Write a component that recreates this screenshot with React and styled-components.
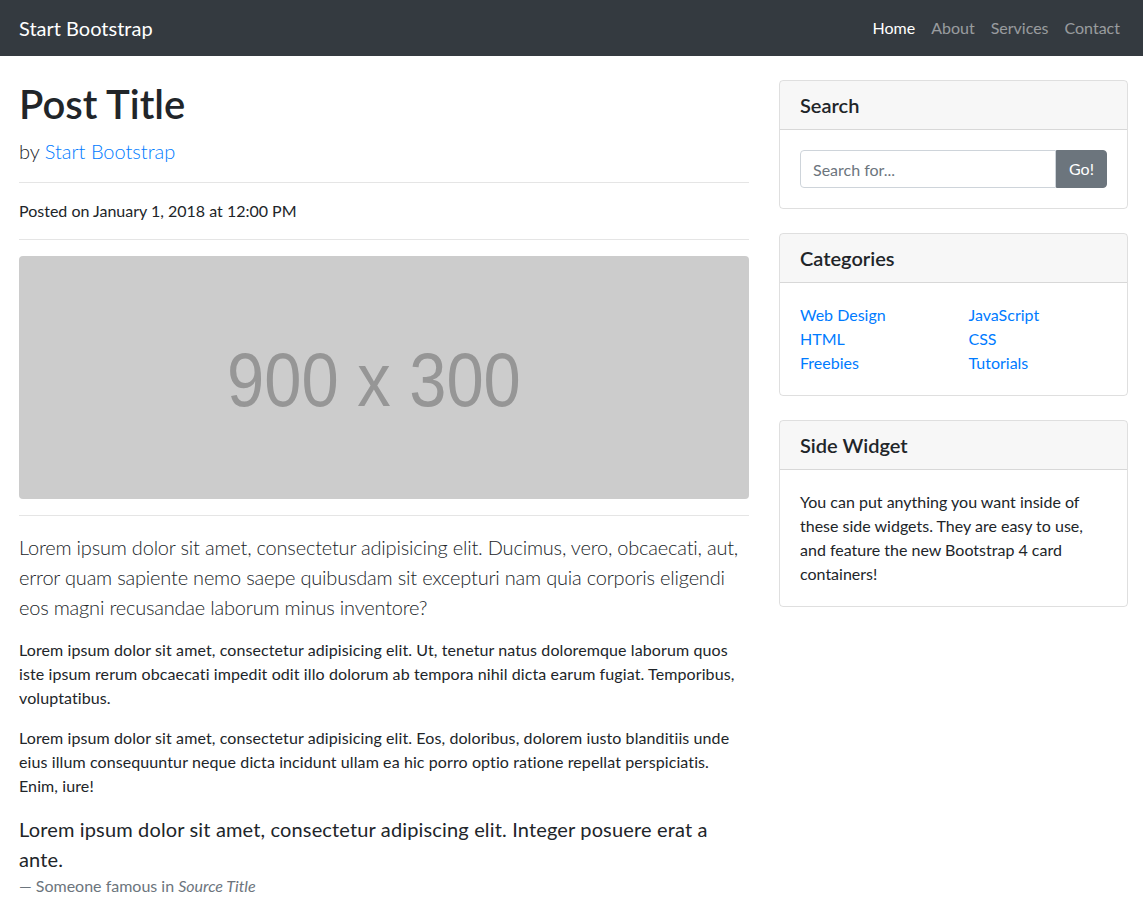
import React from 'react';
import styled, {createGlobalStyle} from 'styled-components';

const GlobalStyle = createGlobalStyle`
  html, body {
    margin: 0;
    padding: 0;
    background: #fff;
  }
  body {
    font-family: Lato, "Open Sans", "Noto Sans", sans-serif;
    font-size: 16px;
    line-height: 1.5;
    color: #212529;
  }
  * {
    box-sizing: border-box;
  }
`;

const Navbar = styled.nav`
  background: #343a40;
  height: 56px;
  display: flex;
  align-items: center;
  justify-content: space-between;
  padding: 0 15px 0 19px;
`;

const Brand = styled.a`
  color: #fff;
  font-size: 20px;
  line-height: 30px;
  text-decoration: none;
`;

const NavList = styled.ul`
  display: flex;
  list-style: none;
  margin: 0;
  padding: 0;
`;

const NavLink = styled.a`
  display: block;
  padding: 8px;
  font-size: 16px;
  line-height: 24px;
  text-decoration: none;
  color: ${(p) => (p.$active ? '#fff' : 'rgba(255, 255, 255, 0.5)')};
`;

const Container = styled.div`
  display: grid;
  grid-template-columns: 730px 349px;
  column-gap: 30px;
  padding: 0 15px 0 19px;
  align-items: start;
`;

const Main = styled.main`
  padding-top: 24px;
`;

const Title = styled.h1`
  margin: 0 0 8px;
  font-size: 40px;
  line-height: 48px;
  font-weight: 600;
`;

const Lead = styled.p`
  margin: 0 0 16px;
  font-size: 20px;
  line-height: 30px;
  font-weight: 300;
  letter-spacing: ${(p) => p.$spacing || '0'};
`;

const Link = styled.a`
  color: #007bff;
  text-decoration: none;
`;

const Rule = styled.hr`
  margin: 16px 0;
  border: 0;
  border-top: 1px solid rgba(0, 0, 0, 0.1);
`;

const Text = styled.p`
  margin: 0 0 16px;
  letter-spacing: ${(p) => p.$spacing || '0'};
`;

const Placeholder = styled.div`
  height: 243px;
  border-radius: 4px;
  background: #cccccc;
  display: flex;
  align-items: center;
  justify-content: center;
  padding-right: 20px;
`;

const PlaceholderLabel = styled.span`
  color: #969696;
  font-family: "Liberation Sans", Arial, sans-serif;
  font-size: 76px;
  line-height: 1;
  transform: scaleX(0.88);
  white-space: nowrap;
  margin-top: 4px;
`;

const Quote = styled.blockquote`
  margin: 0 0 16px;
  font-size: 20px;
  line-height: 30px;
`;

const QuoteText = styled.p`
  margin: 0;
  letter-spacing: 0.15px;
`;

const QuoteFooter = styled.footer`
  display: block;
  font-size: 16px;
  line-height: 24px;
  color: #6c757d;
`;

const Sidebar = styled.aside`
  padding-top: 24px;
  display: flex;
  flex-direction: column;
  gap: 24px;
`;

const Card = styled.div`
  border: 1px solid rgba(0, 0, 0, 0.125);
  border-radius: 4px;
  overflow: hidden;
`;

const CardHeader = styled.h5`
  margin: 0;
  padding: 12px 20px;
  font-size: 20px;
  line-height: 24px;
  font-weight: 600;
  background: rgba(0, 0, 0, 0.03);
  border-bottom: 1px solid rgba(0, 0, 0, 0.125);
`;

const CardBody = styled.div`
  padding: 20px;
`;

const InputGroup = styled.div`
  display: flex;
`;

const SearchInput = styled.input`
  flex: 1;
  min-width: 0;
  height: 38px;
  padding: 6px 12px;
  font: inherit;
  font-size: 16px;
  color: #495057;
  border: 1px solid #ced4da;
  border-radius: 4px 0 0 4px;
  outline: none;
  &::placeholder {
    color: #6c757d;
  }
`;

const GoButton = styled.button`
  height: 38px;
  width: 51px;
  font: inherit;
  font-size: 16px;
  color: #fff;
  background: #6c757d;
  border: 1px solid #6c757d;
  border-radius: 0 4px 4px 0;
  padding: 6px 12px;
`;

const CategoryGrid = styled.div`
  display: grid;
  grid-template-columns: 1fr 1fr;
  column-gap: 30px;
`;

const CategoryList = styled.ul`
  list-style: none;
  margin: 0;
  padding: 0;
`;

const navItems = ['Home', 'About', 'Services', 'Contact'];
const categories = [
  ['Web Design', 'HTML', 'Freebies'],
  ['JavaScript', 'CSS', 'Tutorials']
];

export default function App() {
  return (
    <>
      <GlobalStyle />
      <Navbar>
        <Brand href="#">Start Bootstrap</Brand>
        <NavList>
          {navItems.map((item, i) => (
            <li key={item}>
              <NavLink href="#" $active={i === 0}>
                {item}
              </NavLink>
            </li>
          ))}
        </NavList>
      </Navbar>
      <Container>
        <Main>
          <Title>Post Title</Title>
          <Lead>
            by <Link href="#">Start Bootstrap</Link>
          </Lead>
          <Rule />
          <Text>Posted on January 1, 2018 at 12:00 PM</Text>
          <Rule />
          <Placeholder>
            <PlaceholderLabel>900 x 300</PlaceholderLabel>
          </Placeholder>
          <Rule />
          <Lead $spacing="-0.2px">
            Lorem ipsum dolor sit amet, consectetur adipisicing elit. Ducimus, vero, obcaecati, aut,
            error quam sapiente nemo saepe quibusdam sit excepturi nam quia corporis eligendi eos magni
            recusandae laborum minus inventore?
          </Lead>
          <Text $spacing="0.1px">
            Lorem ipsum dolor sit amet, consectetur adipisicing elit. Ut, tenetur natus doloremque
            laborum quos iste ipsum rerum obcaecati impedit odit illo dolorum ab tempora nihil dicta
            earum fugiat. Temporibus, voluptatibus.
          </Text>
          <Text $spacing="0.1px">
            Lorem ipsum dolor sit amet, consectetur adipisicing elit. Eos, doloribus, dolorem iusto
            blanditiis unde eius illum consequuntur neque dicta incidunt ullam ea hic porro optio
            ratione repellat perspiciatis. Enim, iure!
          </Text>
          <Quote>
            <QuoteText>
              Lorem ipsum dolor sit amet, consectetur adipiscing elit. Integer posuere erat a ante.
            </QuoteText>
            <QuoteFooter>
              — Someone famous in <cite>Source Title</cite>
            </QuoteFooter>
          </Quote>
        </Main>
        <Sidebar>
          <Card>
            <CardHeader>Search</CardHeader>
            <CardBody>
              <InputGroup>
                <SearchInput type="text" placeholder="Search for..." />
                <GoButton type="button">Go!</GoButton>
              </InputGroup>
            </CardBody>
          </Card>
          <Card>
            <CardHeader>Categories</CardHeader>
            <CardBody>
              <CategoryGrid>
                {categories.map((col, i) => (
                  <CategoryList key={i}>
                    {col.map((c) => (
                      <li key={c}>
                        <Link href="#">{c}</Link>
                      </li>
                    ))}
                  </CategoryList>
                ))}
              </CategoryGrid>
            </CardBody>
          </Card>
          <Card>
            <CardHeader>Side Widget</CardHeader>
            <CardBody>
              You can put anything you want inside of these side widgets. They are easy to use, and
              feature the new Bootstrap 4 card containers!
            </CardBody>
          </Card>
        </Sidebar>
      </Container>
    </>
  );
}
